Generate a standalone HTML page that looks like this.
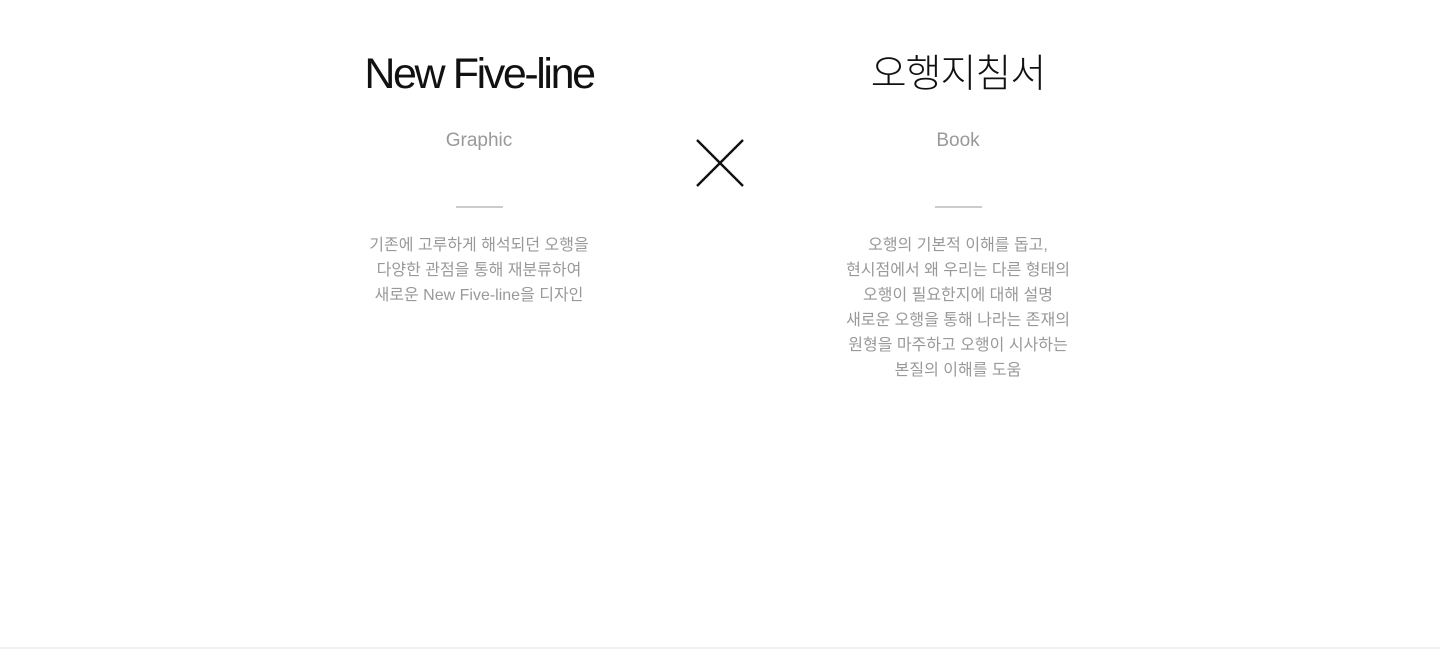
<!DOCTYPE html>
<html><head><meta charset="utf-8"><style>
body{margin:0;width:1440px;height:649px;background:#fff;position:relative;overflow:hidden;font-family:"Liberation Sans","Noto Sans CJK KR",sans-serif}
.col{position:absolute;top:0;width:400px;text-align:center}
.t{position:absolute;left:0;width:400px;top:49px;font-size:43px;line-height:50px;color:#111;letter-spacing:-2.4px}
.s{position:absolute;left:0;width:400px;top:129px;font-size:19px;line-height:24px;color:#999}
.ln{position:absolute;left:177px;top:206px;width:47px;height:2px;background:#ccc}
.b{position:absolute;left:0;width:400px;top:233px;font-size:16px;line-height:25px;color:#999}
.bot{position:absolute;left:0;right:0;top:647px;height:2px;background:#f0f0f0}
</style></head><body>
<div class="col" style="left:279px">
<div class="t">New Five-line</div>
<div class="s">Graphic</div>
<div class="ln"></div>
<div class="b">기존에 고루하게 해석되던 오행을<br>다양한 관점을 통해 재분류하여<br>새로운 New Five-line을 디자인</div>
</div>
<svg style="position:absolute;left:696px;top:139px" width="48" height="48" viewBox="0 0 48 48"><path d="M1 1L47 47M47 1L1 47" stroke="#111" stroke-width="2.4" fill="none"/></svg>
<div class="col" style="left:758px">
<div class="t" style="letter-spacing:-1px;font-size:39px;top:50px;font-weight:300">오행지침서</div>
<div class="s">Book</div>
<div class="ln"></div>
<div class="b">오행의 기본적 이해를 돕고,<br>현시점에서 왜 우리는 다른 형태의<br>오행이 필요한지에 대해 설명<br>새로운 오행을 통해 나라는 존재의<br>원형을 마주하고 오행이 시사하는<br>본질의 이해를 도움</div>
</div>
<div class="bot"></div>
</body></html>
